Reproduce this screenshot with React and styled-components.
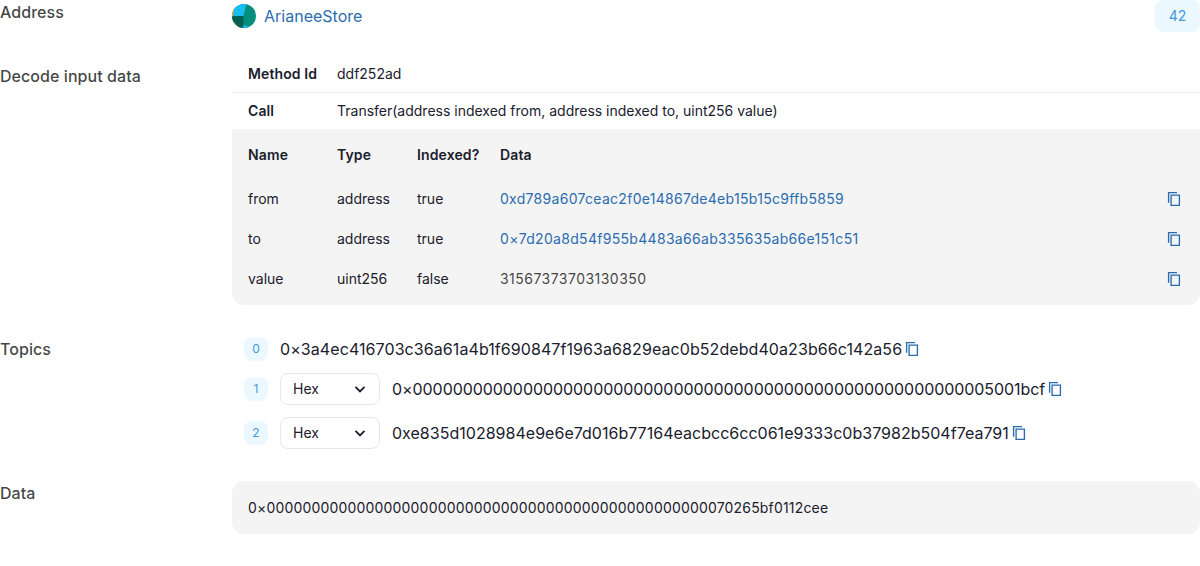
import React from 'react';
import styled, { createGlobalStyle } from 'styled-components';

const Global = createGlobalStyle`
  *{box-sizing:border-box}
  body{margin:0;background:#fff;font-family:Inter,sans-serif;font-size:16px;line-height:24px;color:rgba(16,17,18,.8)}
`;
const Page = styled.main`
  display:grid;grid-template-columns:200px minmax(0,1fr);column-gap:32px;row-gap:32px;height:566px;align-content:start;overflow:hidden;
`;
const Label = styled.div`font-weight:500;letter-spacing:.06px;`;
const AddressRow = styled.div`display:flex;align-items:center;justify-content:space-between;height:32px;`;
const Address = styled.a`display:flex;align-items:center;gap:8px;color:#2b6cb0;`;
const Badge = styled.div`
  display:flex;align-items:center;justify-content:center;background:#ebf8ff;color:#4299e1;
  width:${p => p.$small ? 24 : 45}px;height:${p => p.$small ? 24 : 32}px;font-size:${p => p.$small ? 12 : 14}px;
  border-radius:8px;font-weight:400;flex-shrink:0;
`;
const Decoded = styled.section`font-size:14px;line-height:20px;color:#1a202c;`;
const MethodRow = styled.div`
  display:flex;gap:20px;padding:0 16px 8px;height:${p => p.$last ? 36 : 29}px;
  padding-top:${p => p.$last ? 8 : 0}px;border-bottom:${p => p.$last ? 'none' : '1px solid rgba(16,17,18,.08)'};
`;
const Key = styled.div`width:69px;font-weight:600;white-space:nowrap;letter-spacing:.1px;`;
const Params = styled.div`
  display:grid;grid-template-columns:69px 60px 63px minmax(0,1fr);column-gap:20px;row-gap:20px;
  padding:16px;background:#f4f4f4;border-radius:0 0 12px 12px;height:176px;align-content:start;
`;
const Head = styled.div`font-weight:600;height:24px;letter-spacing:.12px;`;
const DataCell = styled.div`display:flex;justify-content:space-between;align-items:center;color:${p => p.$link ? '#2b6cb0' : 'rgba(16,17,18,.8)'};`;
const Hash = styled.span`letter-spacing:${p => p.$track || 0}px;`;
const Copy = styled.button`
  width:20px;height:20px;border:0;padding:0;background:none;color:#2b6cb0;display:flex;flex-shrink:0;
`;
const Topics = styled.div`display:grid;gap:12px;padding:0 12px;color:#1a202c;`;
const Topic = styled.div`display:flex;align-items:center;gap:12px;height:${p => p.$select ? 32 : 24}px;`;
const Value = styled.div`display:flex;align-items:center;`;
const Select = styled.button`
  display:flex;align-items:center;justify-content:space-between;width:100px;height:32px;padding:0 11px 0 12px;
  border:1px solid #e2e8f0;border-radius:8px;background:#fff;color:#1a202c;font:400 14px/20px Inter,sans-serif;
`;
const DataBox = styled.div`background:#f4f4f4;border-radius:12px;padding:16px;font-size:14px;line-height:21px;color:#1a202c;height:53px;`;

const CopyIcon = () => <Copy aria-label="Copy"><svg width="20" height="20" viewBox="0 0 20 20" fill="none" stroke="currentColor" strokeWidth="1.35"><path d="M7.1 6.1h8.3v10.3H7.1z"/><path d="M4.6 13.8V3.6H13"/></svg></Copy>;
const Avatar = () => <svg width="24" height="24" viewBox="0 0 24 24"><defs><clipPath id="avatar"><circle cx="12" cy="12" r="12"/></clipPath></defs><g clipPath="url(#avatar)"><path fill="#018e7c" d="M0 0h24v24H0z"/><path fill="#18bdf2" d="M0 0h14.5l-3.2 12H0z"/><path fill="#035e56" d="M0 12.3 11.3 12v12H0z"/><path fill="#18bdf2" d="m11.3 21 7 2-3 2h-4z"/><path fill="#f6a21a" d="M0 4h2.4L.9 12.2H0zM1.5 17.5l3.5 4-1 1-4-4z"/></g></svg>;

const params = [
  ['from', 'address', 'true', '0xd789a607ceac2f0e14867de4eb15b15c9ffb5859', .29],
  ['to', 'address', 'true', '0×7d20a8d54f955b4483a66ab335635ab66e151c51', .305],
  ['value', 'uint256', 'false', '31567373703130350', .47],
];
const padded = (tail) => '0×' + tail.padStart(64, '0');
const topics = [
  { value: '0×3a4ec416703c36a61a4b1f690847f1963a6829eac0b52debd40a23b66c142a56', track: .077 },
  { value: padded('5001bcf'), track: -.062 },
  { value: '0xe835d1028984e9e6e7d016b77164eacbcc6cc061e9333c0b37982b504f7ea791', track: .02 },
];

export default function App() {
  return <><Global/><Page>
    <Label>Address</Label>
    <AddressRow><Address><Avatar/>ArianeeStore</Address><Badge>42</Badge></AddressRow>
    <Label>Decode input data</Label>
    <Decoded>
      <MethodRow><Key>Method Id</Key><span>ddf252ad</span></MethodRow>
      <MethodRow $last><Key>Call</Key><span>Transfer(address indexed from, address indexed to, uint256 value)</span></MethodRow>
      <Params>{['Name','Type','Indexed?','Data'].map(h => <Head key={h}>{h}</Head>)}
        {params.map(([n,t,i,d,track]) => <React.Fragment key={n}><span>{n}</span><span>{t}</span><span>{i}</span><DataCell $link={n !== 'value'}><Hash $track={track}>{d}</Hash><CopyIcon/></DataCell></React.Fragment>)}
      </Params>
    </Decoded>
    <Label>Topics</Label>
    <Topics>{topics.map((t,i) => <Topic key={t.value} $select={i > 0}><Badge $small>{i}</Badge>{i > 0 && <Select>Hex<svg width="16" height="16" viewBox="0 0 16 16" fill="none" stroke="currentColor" strokeWidth="1.9"><path d="m3.5 5.8 4.5 4.5 4.5-4.5"/></svg></Select>}<Value><Hash $track={t.track}>{t.value}</Hash><CopyIcon/></Value></Topic>)}</Topics>
    <Label>Data</Label>
    <DataBox><Hash $track={.178}>{padded('70265bf0112cee')}</Hash></DataBox>
  </Page></>;
}
